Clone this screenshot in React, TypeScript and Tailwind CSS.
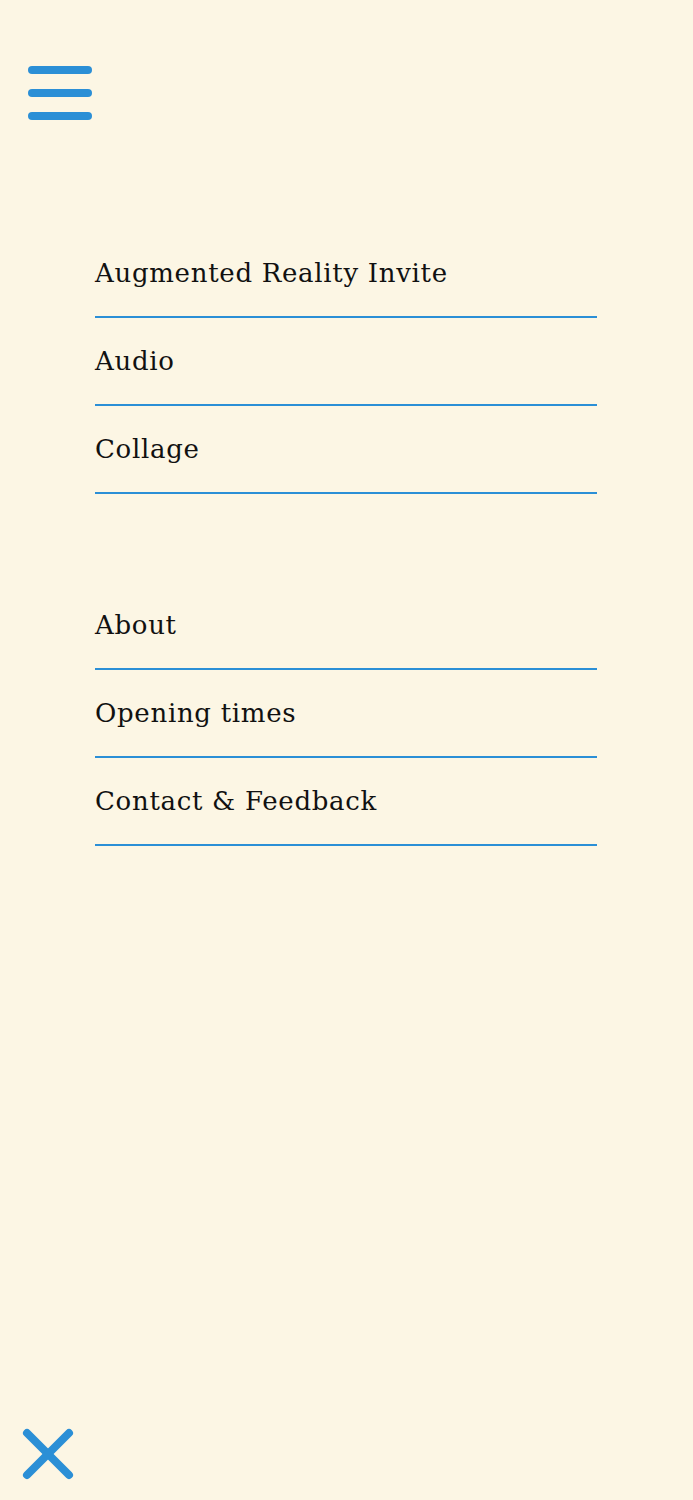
import React from "react";

const items1 = ["Augmented Reality Invite", "Audio", "Collage"];
const items2 = ["About", "Opening times", "Contact & Feedback"];

function Item({ label }: { label: string }) {
  return (
    <li className="h-[88px] flex items-center border-b-2 border-[#2b8fd6]">
      <span className="text-[26px] leading-none tracking-[0.7px] text-[#111]">{label}</span>
    </li>
  );
}

export default function App() {
  return (
    <div
      className="w-full min-h-[1500px] bg-[#fcf6e4] relative"
      style={{ fontFamily: '"DejaVu Serif", serif' }}
    >
      <div className="pt-[66px] pl-[28px]">
        <svg width="64" height="54" viewBox="0 0 64 54">
          <line x1="4" y1="4" x2="60" y2="4" stroke="#2b8fd6" strokeWidth="8" strokeLinecap="round" />
          <line x1="4" y1="27" x2="60" y2="27" stroke="#2b8fd6" strokeWidth="8" strokeLinecap="round" />
          <line x1="4" y1="50" x2="60" y2="50" stroke="#2b8fd6" strokeWidth="8" strokeLinecap="round" />
        </svg>
      </div>
      <nav className="mt-[110px] ml-[95px] w-[502px]">
        <ul>
          {items1.map((l) => (
            <Item key={l} label={l} />
          ))}
        </ul>
        <ul className="mt-[88px]">
          {items2.map((l) => (
            <Item key={l} label={l} />
          ))}
        </ul>
      </nav>
      <div className="absolute left-[22px] top-[1428px]">
        <svg width="52" height="52" viewBox="0 0 52 52">
          <line x1="5" y1="5" x2="47" y2="47" stroke="#2b8fd6" strokeWidth="8" strokeLinecap="round" />
          <line x1="47" y1="5" x2="5" y2="47" stroke="#2b8fd6" strokeWidth="8" strokeLinecap="round" />
        </svg>
      </div>
    </div>
  );
}
